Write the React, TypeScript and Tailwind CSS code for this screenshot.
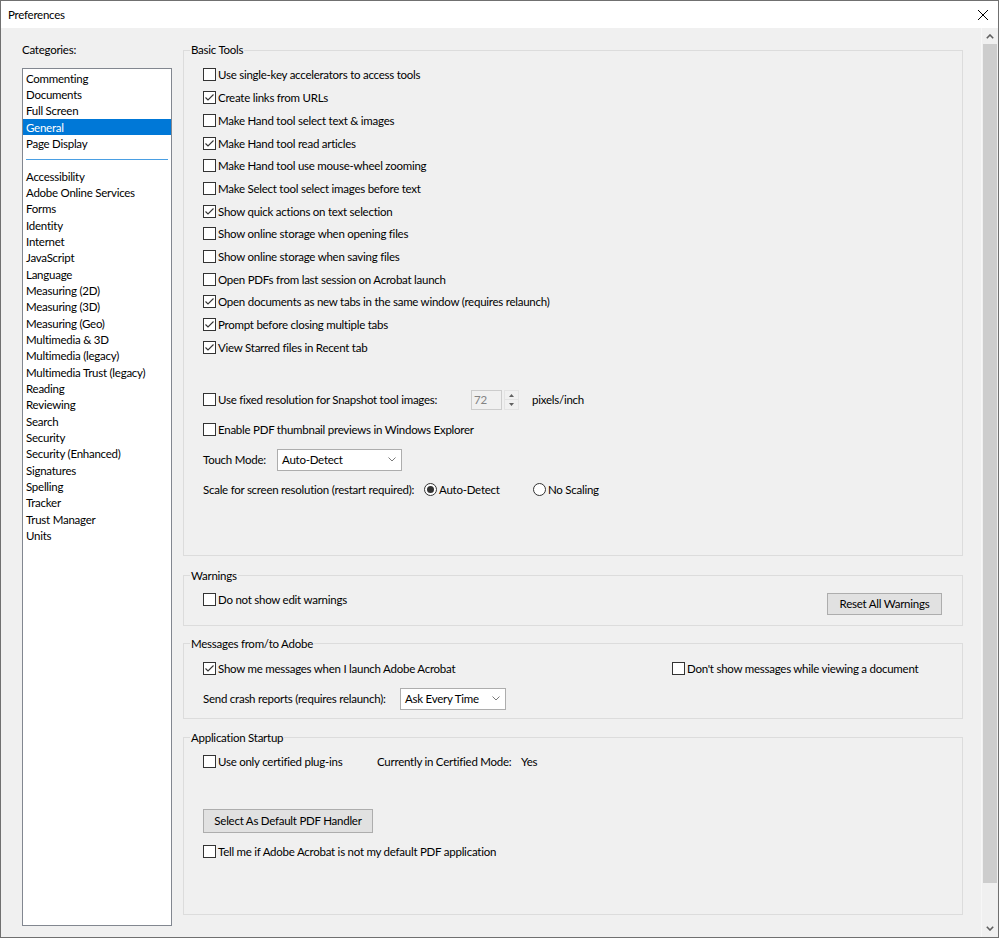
import React from "react";

const topCats = ["Commenting", "Documents", "Full Screen", "General", "Page Display"];
const bottomCats = [
  "Accessibility",
  "Adobe Online Services",
  "Forms",
  "Identity",
  "Internet",
  "JavaScript",
  "Language",
  "Measuring (2D)",
  "Measuring (3D)",
  "Measuring (Geo)",
  "Multimedia & 3D",
  "Multimedia (legacy)",
  "Multimedia Trust (legacy)",
  "Reading",
  "Reviewing",
  "Search",
  "Security",
  "Security (Enhanced)",
  "Signatures",
  "Spelling",
  "Tracker",
  "Trust Manager",
  "Units",
];

const basic: [string, boolean][] = [
  ["Use single-key accelerators to access tools", false],
  ["Create links from URLs", true],
  ["Make Hand tool select text & images", false],
  ["Make Hand tool read articles", true],
  ["Make Hand tool use mouse-wheel zooming", false],
  ["Make Select tool select images before text", false],
  ["Show quick actions on text selection", true],
  ["Show online storage when opening files", false],
  ["Show online storage when saving files", false],
  ["Open PDFs from last session on Acrobat launch", false],
  ["Open documents as new tabs in the same window (requires relaunch)", true],
  ["Prompt before closing multiple tabs", true],
  ["View Starred files in Recent tab", true],
];

function Box({ checked }: { checked?: boolean }) {
  return (
    <span className="w-[13px] h-[13px] shrink-0 border border-[#333333] bg-white flex items-center justify-center">
      {checked && (
        <svg width="11" height="11" viewBox="0 0 11 11">
          <polyline points="1.5,5.5 4,8 9.5,2.5" fill="none" stroke="#333333" strokeWidth="1.1" />
        </svg>
      )}
    </span>
  );
}

function Check({ label, checked }: { label: string; checked?: boolean }) {
  return (
    <div className="flex items-center">
      <Box checked={checked} />
      <span className="ml-[2px] pt-[1px] whitespace-nowrap">{label}</span>
    </div>
  );
}

function Radio({ label, checked }: { label: string; checked?: boolean }) {
  return (
    <div className="flex items-center">
      <span className="w-[13px] h-[13px] rounded-full border border-[#333333] bg-white flex items-center justify-center">
        {checked && <span className="w-[7px] h-[7px] rounded-full bg-[#333333]" />}
      </span>
      <span className="ml-[2px] pt-[1px] whitespace-nowrap">{label}</span>
    </div>
  );
}

function Chevron({ up }: { up?: boolean }) {
  return (
    <svg width="8" height="5" viewBox="0 0 8 5">
      <polyline
        points={up ? "0.8,4.2 4,1 7.2,4.2" : "0.8,0.8 4,4 7.2,0.8"}
        fill="none"
        stroke="#606060"
        strokeWidth="1.6"
      />
    </svg>
  );
}

function Select({ value, w }: { value: string; w: string }) {
  return (
    <div className={`${w} h-[22px] border border-[#adadad] bg-white flex items-center`}>
      <div className="flex-1 h-full flex items-center pl-[4px] pt-[1px]">{value}</div>
      <div className="w-[19px] h-full flex items-center justify-center">
        <svg width="8" height="5" viewBox="0 0 8 5">
          <polyline points="0.5,0.5 4,4 7.5,0.5" fill="none" stroke="#7a7a7a" strokeWidth="1" />
        </svg>
      </div>
    </div>
  );
}

function Button({ label, w, h }: { label: string; w: string; h: string }) {
  return (
    <div className={`${w} ${h} pt-[1px] border border-[#adadad] bg-[#e1e1e1] flex items-center justify-center whitespace-nowrap`}>
      {label}
    </div>
  );
}

function Group({ title, className, children }: { title: string; className: string; children: React.ReactNode }) {
  return (
    <fieldset className={`border border-[#dcdcdc] ${className}`}>
      <legend className="ml-[6px] px-[1px] h-[16px] leading-[16px]">{title}</legend>
      {children}
    </fieldset>
  );
}

export default function App() {
  return (
    <div className="w-[999px] h-[938px] border border-[#707070] bg-[#f0f0f0] flex flex-col overflow-hidden whitespace-nowrap text-[11.5px] tracking-[-0.25px] leading-[16px] text-black font-['Lato','Liberation_Sans',sans-serif]">
      {/* Title bar */}
      <div className="h-[27px] shrink-0 bg-white flex items-center justify-between pl-[7px] pr-[7px]">
        <span>Preferences</span>
        <svg width="12" height="12" viewBox="0 0 12 12" className="mr-[2px]">
          <path d="M1 1 L11 11 M11 1 L1 11" stroke="#000" strokeWidth="1" />
        </svg>
      </div>

      {/* Body */}
      <div className="flex-1 flex">
        {/* Left column */}
        <div className="pl-[21px] pt-[14px] flex flex-col">
          <div className="h-[16px]">Categories:</div>
          <div className="mt-[10px] w-[150px] h-[858px] border border-[#828790] bg-white pt-[1px] flex flex-col">
            {topCats.map((c) => (
              <div
                key={c}
                className={
                  c === "General"
                    ? "h-[16.33px] flex items-center pl-[3px] pt-[1px] bg-[#0078d7] text-white"
                    : "h-[16.33px] flex items-center pl-[3px] pt-[1px]"
                }
              >
                {c}
              </div>
            ))}
            <div className="h-[16.33px] flex items-center px-[3px]">
              <div className="w-full h-[1px] bg-[#4a9fe3]" />
            </div>
            {bottomCats.map((c) => (
              <div key={c} className="h-[16.33px] flex items-center pl-[3px] pt-[1px]">
                {c}
              </div>
            ))}
          </div>
        </div>

        {/* Right column */}
        <div className="ml-[11px] w-[780px] pt-[14px] flex flex-col">
          {/* Basic Tools */}
          <Group title="Basic Tools" className="">
            <div className="pl-[19px] pt-[5.65px] pb-[50px]">
              {basic.map(([l, c]) => (
                <div key={l} className="h-[22.7px] flex items-center">
                  <Check label={l} checked={c} />
                </div>
              ))}
              <div className="mt-[26.25px] h-[30px] flex items-center">
                <div className="w-[268px]">
                  <Check label="Use fixed resolution for Snapshot tool images:" />
                </div>
                <div className="w-[31px] h-[20px] border border-[#cccccc] bg-[#f0f0f0] text-[#838383] pl-[2px] pt-[1px] flex items-center">
                  72
                </div>
                <div className="ml-[2px] w-[15px] h-[20px] flex flex-col border border-[#e3e3e3]">
                  <div className="flex-1 flex items-center justify-center border-b border-[#e3e3e3]">
                    <svg width="5" height="3" viewBox="0 0 5 3">
                      <polygon points="0,3 2.5,0 5,3" fill="#606060" />
                    </svg>
                  </div>
                  <div className="flex-1 flex items-center justify-center">
                    <svg width="5" height="3" viewBox="0 0 5 3">
                      <polygon points="0,0 2.5,3 5,0" fill="#606060" />
                    </svg>
                  </div>
                </div>
                <span className="ml-[13px] pt-[1px]">pixels/inch</span>
              </div>
              <div className="h-[30px] flex items-center">
                <Check label="Enable PDF thumbnail previews in Windows Explorer" />
              </div>
              <div className="h-[30px] flex items-center">
                <div className="w-[74px] pt-[1px]">Touch Mode:</div>
                <Select value="Auto-Detect" w="w-[125px]" />
              </div>
              <div className="h-[30px] flex items-center">
                <div className="w-[221px] pt-[1px]">Scale for screen resolution (restart required):</div>
                <div className="w-[109px]">
                  <Radio label="Auto-Detect" checked />
                </div>
                <Radio label="No Scaling" />
              </div>
            </div>
          </Group>

          {/* Warnings */}
          <Group title="Warnings" className="mt-[12px]">
            <div className="pl-[19px] pr-[20px] pb-[10px] flex items-start justify-between">
              <div className="mt-[5px] h-[22px] flex items-center">
                <Check label="Do not show edit warnings" />
              </div>
              <div className="mt-[9px]">
                <Button label="Reset All Warnings" w="w-[115px]" h="h-[22px]" />
              </div>
            </div>
          </Group>

          {/* Messages */}
          <Group title="Messages from/to Adobe" className="mt-[10px]">
            <div className="pl-[19px] pt-[2px] pb-[4px]">
              <div className="h-[30px] flex items-center">
                <div className="w-[469px]">
                  <Check label="Show me messages when I launch Adobe Acrobat" checked />
                </div>
                <Check label="Don't show messages while viewing a document" />
              </div>
              <div className="h-[30px] flex items-center">
                <div className="w-[197px] pt-[1px]">Send crash reports (requires relaunch):</div>
                <Select value="Ask Every Time" w="w-[106px]" />
              </div>
            </div>
          </Group>

          {/* Application Startup */}
          <Group title="Application Startup" className="mt-[11px]">
            <div className="pl-[19px] pt-[5px] pb-[51px]">
              <div className="h-[22px] flex items-center">
                <div className="w-[174px]">
                  <Check label="Use only certified plug-ins" />
                </div>
                <div className="w-[144px] pt-[1px]">Currently in Certified Mode:</div>
                <span className="pt-[1px]">Yes</span>
              </div>
              <div className="mt-[36px]">
                <Button label="Select As Default PDF Handler" w="w-[170px]" h="h-[24px]" />
              </div>
              <div className="mt-[8px] h-[22px] flex items-center">
                <Check label="Tell me if Adobe Acrobat is not my default PDF application" />
              </div>
            </div>
          </Group>
        </div>

        {/* Scrollbar */}
        <div className="ml-auto w-[17px] bg-[#f0f0f0] flex flex-col border-l border-[#f7f7f7]">
          <div className="h-[16px] flex items-center justify-center">
            <Chevron up />
          </div>
          <div className="h-[839px] mx-[1px] bg-[#cdcdcd]" />
          <div className="flex-1" />
          <div className="h-[17px] flex items-center justify-center">
            <Chevron />
          </div>
        </div>
      </div>
    </div>
  );
}
